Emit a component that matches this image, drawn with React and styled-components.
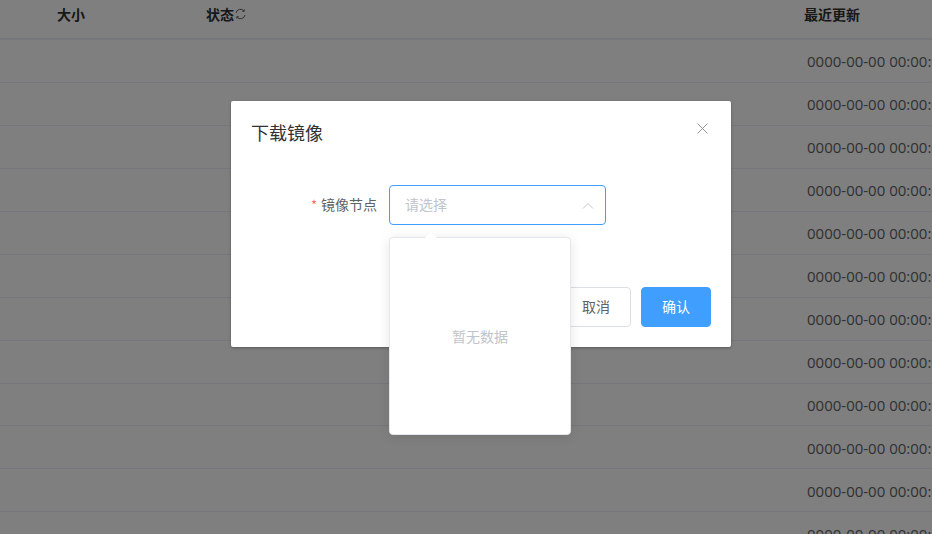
import React from "react";
import styled, { createGlobalStyle } from "styled-components";

const Global = createGlobalStyle`
  html, body { margin: 0; padding: 0; height: 100%; overflow: hidden; background: #fff; }
  body { font-family: "Noto Sans CJK SC", "Noto Sans", sans-serif; }
  * { box-sizing: border-box; }
`;

const Page = styled.div`
  width: 932px;
  height: 534px;
  overflow: hidden;
  position: relative;
`;
const HeaderRow = styled.div`
  display: grid;
  grid-template-columns: 206px 598px 1fr;
  height: 40px;
  border-bottom: 2px solid #ebeef5;
  padding-top: 4px;
  font-size: 14px;
  line-height: 20px;
  font-weight: 700;
  color: #303133;
`;
const SizeHead = styled.div`
  padding-left: 57px;
`;
const StatusHead = styled.div`
  display: flex;
  align-items: center;
  height: 20px;
`;
const Row = styled.div`
  display: flex;
  align-items: center;
  height: 42.95px;
  border-bottom: 1px solid #ebeef5;
  padding-left: 807px;
  color: #606266;
  white-space: nowrap;
  overflow: hidden;
`;
const DateText = styled.span`
  flex: none;
  padding-top: 1px;
  font-size: 15px;
  font-family: "Open Sans", "Noto Sans", sans-serif;
`;
const Overlay = styled.div`
  position: absolute;
  inset: 0;
  background: rgba(0, 0, 0, 0.5);
  padding: 101px 0 0 231px;
`;
const Dialog = styled.div`
  width: 500px;
  height: 246px;
  background: #fff;
  border-radius: 2px;
  box-shadow: 0 1px 3px rgba(0, 0, 0, 0.3);
  padding: 20px;
  display: flex;
  flex-direction: column;
  position: relative;
`;
const TitleBar = styled.div`
  display: flex;
  justify-content: space-between;
  align-items: flex-start;
  height: 24px;
`;
const Title = styled.span`
  font-size: 18px;
  line-height: 22px;
  color: #303133;
`;
const Close = styled.button`
  border: 0;
  background: none;
  padding: 0;
  width: 11px;
  height: 11px;
  margin: 2px 3px 0 0;
  color: #909399;
  display: flex;
`;
const FormRow = styled.div`
  display: flex;
  align-items: center;
  margin-top: 40px;
  height: 40px;
`;
const Label = styled.label`
  width: 138px;
  padding: 0 12px 2px 0;
  text-align: right;
  font-size: 14px;
  color: #606266;
`;
const Star = styled.span`
  color: #f56c6c;
  margin-right: 4px;
  font-size: 13px;
`;
const SelectBox = styled.div`
  width: 217px;
  height: 40px;
  border: 1px solid #409eff;
  border-radius: 4px;
  display: flex;
  align-items: center;
  justify-content: space-between;
  padding: 0 11px 2px 15px;
  font-size: 14px;
  color: #c0c4cc;
`;
const Chevron = styled.svg`
  margin-top: 2px;
`;
const Footer = styled.div`
  display: flex;
  justify-content: flex-end;
  gap: 10px;
  margin-top: 62px;
`;
const Button = styled.button`
  width: 70px;
  height: 40px;
  border-radius: 4px;
  font: inherit;
  font-size: 14px;
  padding: 0 0 2px;
  border: 1px solid ${(p) => (p.$primary ? "#409eff" : "#dcdfe6")};
  background: ${(p) => (p.$primary ? "#409eff" : "#fff")};
  color: ${(p) => (p.$primary ? "#fff" : "#606266")};
`;
const Dropdown = styled.div`
  position: absolute;
  left: 158px;
  top: 136px;
  width: 182px;
  height: 198px;
  background: #fff;
  border: 1px solid #e4e7ed;
  border-radius: 4px;
  box-shadow: 0 2px 12px rgba(0, 0, 0, 0.1);
  display: flex;
  align-items: center;
  justify-content: center;
  font-size: 14px;
  color: #c0c4cc;
`;
const Arrow = styled.span`
  position: absolute;
  top: -6px;
  left: 35px;
  width: 0;
  height: 0;
  border-left: 6px solid transparent;
  border-right: 6px solid transparent;
  border-bottom: 6px solid #fff;
`;

const rows = Array.from({ length: 12 });

export default function App() {
  return (
    <Page>
      <Global />
      <HeaderRow>
        <SizeHead>大小</SizeHead>
        <StatusHead>
          状态
          <svg width="13" height="12" viewBox="0 0 13 12" fill="none" stroke="#606266" strokeWidth="1">
            <path d="M2 5A4.5 4.5 0 0 1 10 3" />
            <path d="M11 7A4.5 4.5 0 0 1 3 9" />
            <path d="M10.3 1.2V3.4H8.1M2.7 10.8V8.6H4.9" strokeWidth="0.8" />
          </svg>
        </StatusHead>
        <div>最近更新</div>
      </HeaderRow>
      {rows.map((_, i) => (
        <Row key={i}>
          <DateText>0000-00-00 00:00:00</DateText>
        </Row>
      ))}
      <Overlay>
        <Dialog>
          <TitleBar>
            <Title>下载镜像</Title>
            <Close aria-label="关闭">
              <svg width="11" height="11" viewBox="0 0 11 11" stroke="currentColor" strokeWidth="1">
                <path d="M.5.5l10 10M10.5.5l-10 10" />
              </svg>
            </Close>
          </TitleBar>
          <FormRow>
            <Label>
              <Star>*</Star>镜像节点
            </Label>
            <SelectBox>
              请选择
              <Chevron width="12" height="7" viewBox="0 0 12 7" fill="none" stroke="#c0c4cc" strokeWidth="1">
                <path d="M1 6.5L6 1.5 11 6.5" />
              </Chevron>
            </SelectBox>
          </FormRow>
          <Footer>
            <Button>取消</Button>
            <Button $primary>确认</Button>
          </Footer>
          <Dropdown>
            <Arrow />
            暂无数据
          </Dropdown>
        </Dialog>
      </Overlay>
    </Page>
  );
}
